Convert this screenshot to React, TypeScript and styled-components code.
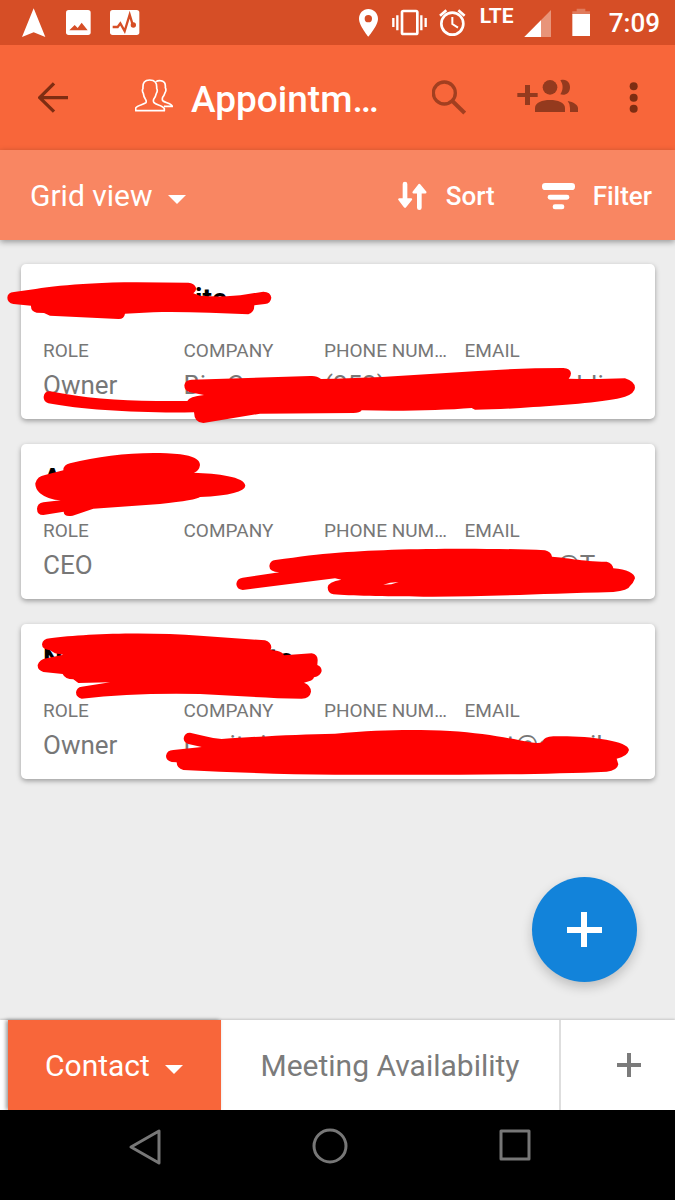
import React from 'react';
import styled, { createGlobalStyle } from 'styled-components';

const GlobalStyle = createGlobalStyle`
  * { box-sizing: border-box; }
  body { margin: 0; font-family: Roboto, "Liberation Sans", sans-serif; background: #ededed; }
  button { font: inherit; color: inherit; background: none; border: 0; padding: 0; cursor: pointer; }
  svg { display: block; flex: none; }
  h1, h2, dl, dt, dd { margin: 0; font-weight: 400; }
`;

const Screen = styled.div`
  min-height: 100vh;
  display: flex;
  flex-direction: column;
`;

const StatusBar = styled.div`
  height: 45px;
  display: flex;
  justify-content: space-between;
  padding: 0 15px 0 22px;
  background: #d64e26;
  color: #fff;
`;

const StatusGroup = styled.div<{ $gap: number }>`
  display: flex;
  gap: ${(p) => p.$gap}px;
`;

const Network = styled.span`
  width: 35px;
  font-size: 21px;
  font-weight: 700;
  line-height: 33px;
`;

const Clock = styled.time`
  font-size: 26px;
  font-weight: 500;
  line-height: 47px;
`;

const AppBar = styled.header`
  height: 105px;
  display: flex;
  align-items: center;
  padding: 0 37px 0 38px;
  background: #f8663a;
  color: #fff;
`;

const Heading = styled.div`
  flex: 1;
  display: flex;
  align-items: center;
  gap: 18px;
  margin-left: 67px;
`;

const Title = styled.h1`
  font-size: 37px;
  line-height: 44px;
  font-weight: 500;
  padding-top: 4px;
  white-space: nowrap;
`;

const Actions = styled.div`
  display: flex;
  gap: 51px;
`;

const Toolbar = styled.div`
  position: relative;
  height: 90px;
  display: flex;
  align-items: center;
  justify-content: space-between;
  padding: 2px 23px 0 30px;
  background: #f98662;
  color: #fff;
  box-shadow: 0 2px 6px rgba(0, 0, 0, 0.36);
`;

const DropButton = styled.button`
  display: flex;
  align-items: center;
  gap: 15px;
  font-size: 30px;
  line-height: 40px;
  white-space: nowrap;
`;

const ToolGroup = styled.div`
  display: flex;
  gap: 47px;
`;

const ToolButton = styled.button`
  display: flex;
  align-items: center;
  gap: 18px;
  font-size: 26px;
  font-weight: 500;
  line-height: 36px;
`;

const Main = styled.main`
  position: relative;
  flex: 1;
  display: flex;
  flex-direction: column;
  gap: 25px;
  padding: 24px 20px 160px 21px;
`;

const Card = styled.article`
  position: relative;
  padding: 18px 50px 18px 22px;
  background: #fff;
  border-radius: 5px;
  box-shadow: 0 2px 5px rgba(0, 0, 0, 0.34);
`;

const Name = styled.h2`
  height: 32px;
  margin-bottom: 25px;
  font-size: 28px;
  font-weight: 700;
  line-height: 34px;
  color: #000;
  white-space: nowrap;
`;

const Fields = styled.dl`
  display: grid;
  grid-template-columns: repeat(4, 1fr);
  color: #777;
`;

const Field = styled.div`
  min-width: 0;
  white-space: nowrap;
`;

const Label = styled.dt`
  font-size: 19px;
  line-height: 24px;
`;

const Value = styled.dd`
  height: 32px;
  margin-top: 6px !important;
  font-size: 26px;
  line-height: 32px;
`;

const Blank = styled.span<{ $width: number }>`
  display: inline-block;
  width: ${(p) => p.$width}px;
`;

const Marker = styled.svg`
  position: absolute;
  left: -21px;
  top: -14px;
  pointer-events: none;
`;

const AddButton = styled.button`
  position: absolute;
  right: 38px;
  bottom: 38px;
  width: 105px;
  height: 105px;
  display: grid;
  place-items: center;
  border-radius: 50%;
  background: #1283da;
  box-shadow: 0 5px 12px rgba(0, 0, 0, 0.2);
`;

const Tabs = styled.nav`
  height: 90px;
  display: flex;
  padding-left: 8px;
  background: #fff;
  box-shadow: 0 -1px 2px rgba(0, 0, 0, 0.16);
  position: relative;
`;

const ActiveTab = styled(DropButton)`
  width: 213px;
  padding-left: 37px;
  padding-top: 2px;
  background: #f8663a;
  color: #fff;
  box-shadow: -2px 0 4px rgba(0, 0, 0, 0.4);
`;

const Tab = styled.button`
  flex: 1;
  padding-top: 2px;
  font-size: 30px;
  line-height: 40px;
  color: #7b7b7b;
  border-right: 2px solid #dedede;
  white-space: nowrap;
`;

const NewTab = styled.button`
  width: 114px;
  display: flex;
  align-items: center;
  padding-left: 56px;
`;

const SystemBar = styled.nav`
  height: 90px;
  display: grid;
  grid-template-columns: repeat(3, 1fr);
  justify-items: center;
  padding: 0 68px 0 52px;
  background: #000;
`;

const Caret = () => (
  <svg width="18" height="27" viewBox="0 0 18 27" aria-hidden="true">
    <path d="M0 12H18L9 21Z" fill="#fff" />
  </svg>
);

type Fragment = string | number;

interface Contact {
  name: Fragment[];
  role: string;
  company: Fragment[];
  phone: Fragment[];
  email: Fragment[];
  marks: string[];
  gaps?: string;
}

const contacts: Contact[] = [
  {
    name: [152, 'ite'],
    role: 'Owner',
    company: ['Big C'],
    phone: ['(252)'],
    email: [112, 'bli'],
    marks: [
      'M22 143Q22 128 42 126C130 115 200 98 410 97L565 98Q583 100 588 113Q590 124 580 130L600 137C650 141 700 140 740 133L790 125Q812 125 814 143Q812 160 795 162L763 166Q763 188 745 193C650 190 550 184 460 187L375 191Q372 208 355 207L150 197L132 189L110 188Q92 184 93 167L40 162Q22 158 22 143Z',
      'M131 440Q133 424 150 424C250 444 350 453 470 453L562 453Q567 440 612 435L570 427Q553 422 553 406Q555 390 575 389L930 378Q950 376 963 387L1005 386L1145 381C1300 372 1450 359 1605 355L1690 354Q1711 355 1713 370Q1713 380 1706 386C1760 388 1820 387 1875 385Q1904 394 1905 413Q1904 430 1875 440C1820 456 1700 464 1600 471Q1500 479 1425 479L1415 474C1330 481 1200 484 1085 481Q1080 489 1060 489L780 491L610 519Q583 519 582 487C420 490 250 480 145 460Q130 455 131 440Z',
    ],
  },
  {
    name: ['A'],
    role: 'CEO',
    company: [],
    phone: [],
    email: [92, '@T'],
    marks: [
      'M190 121Q190 104 210 100C300 78 400 66 500 70C560 72 600 82 600 105Q598 122 582 128C650 130 736 140 736 167Q734 194 600 201Q590 210 480 222L280 236L218 257Q192 262 191 245L130 255Q111 255 111 236Q112 220 130 217L182 211Q145 210 120 190Q105 175 106 160Q112 138 135 135Z',
      'M709 462Q710 446 728 443L838 427Q808 426 808 408Q810 392 826 390C900 380 960 372 1005 369C1150 355 1450 352 1635 361Q1653 365 1656 380C1700 382 1740 394 1820 395Q1838 400 1840 415C1880 418 1905 430 1905 445Q1900 460 1890 468Q1885 482 1840 486C1600 492 1450 501 1270 500C1150 500 1050 497 1000 493Q983 490 983 472Q984 455 1024 449L1005 445L728 480Q710 478 709 462Z',
    ],
    gaps: 'M1150 464L1170 458L1196 456L1174 463Z',
  },
  {
    name: ['N', 206, 'te'],
    role: 'Owner',
    company: ['L', 32, 'it', 16, 'i'],
    phone: [],
    email: [42, 't@gmail'],
    marks: [
      'M126 103Q128 86 150 85C250 70 450 65 600 77L795 91Q812 95 814 112L812 120L830 122Q848 125 852 136L935 130Q953 133 953 150L952 165Q965 170 965 183Q962 198 942 202Q940 213 912 218Q933 226 933 245Q930 265 905 266C800 265 700 256 600 252Q400 248 245 266Q228 262 228 247Q230 232 245 230L330 217L235 219L220 208Q195 208 188 192L130 186Q112 180 113 165Q118 148 140 145L190 134L165 130L150 121Q126 118 126 103Z',
      'M551 385Q553 368 570 368C600 374 630 384 665 387C800 378 900 373 1005 371C1150 358 1250 358 1350 363C1450 369 1530 385 1590 397Q1620 402 1628 395Q1632 380 1660 379C1750 376 1886 390 1887 420Q1882 440 1850 446L1855 463Q1852 482 1820 485C1600 495 1300 495 1005 494C850 494 700 487 550 480Q530 475 530 457L515 456Q498 452 498 438Q500 420 520 420L605 411L565 402Q551 398 551 385Z',
    ],
  },
];

const Fragments = ({ parts }: { parts: Fragment[] }) => (
  <>
    {parts.map((part, i) =>
      typeof part === 'number' ? <Blank key={i} $width={part} /> : <React.Fragment key={i}>{part}</React.Fragment>,
    )}
  </>
);

const ContactCard = ({ contact }: { contact: Contact }) => {
  const fields: [string, Fragment[]][] = [
    ['ROLE', [contact.role]],
    ['COMPANY', contact.company],
    ['PHONE NUM…', contact.phone],
    ['EMAIL', contact.email],
  ];
  return (
    <Card>
      <Name><Fragments parts={contact.name} /></Name>
      <Fields>
        {fields.map(([label, value]) => (
          <Field key={label}>
            <Label>{label}</Label>
            <Value><Fragments parts={value} /></Value>
          </Field>
        ))}
      </Fields>
      <Marker width="675" height="180" viewBox="0 0 2025 540" aria-hidden="true">
        {contact.marks.map((d) => <path key={d} d={d} fill="#f00" />)}
        {contact.gaps && <path d={contact.gaps} fill="#fff" />}
      </Marker>
    </Card>
  );
};

export default function App() {
  return (
    <Screen>
      <GlobalStyle />
      <StatusBar>
        <StatusGroup $gap={19}>
          <svg width="25" height="45" viewBox="66 0 75 135">
            <path d="M101 25L136 111L101 97L66 111Z" fill="#fff" />
          </svg>
          <svg width="25" height="45" viewBox="199 0 75 135">
            <rect x="199" y="30" width="74" height="75" rx="8" fill="#fff" />
            <path d="M209 91L225 75L234 84L246 68L264 91Z" fill="#d64e26" />
          </svg>
          <svg width="30" height="45" viewBox="329 0 90 135">
            <rect x="329" y="30" width="88" height="75" rx="8" fill="#fff" />
            <path d="M337 81H352L360 70L373 93L388 44L397 74" fill="none" stroke="#d64e26" strokeWidth="7" />
            <circle cx="399" cy="75" r="8" fill="#d64e26" />
          </svg>
        </StatusGroup>
        <StatusGroup $gap={8}>
          <svg width="28" height="45" viewBox="48 0 84 135">
            <path fillRule="evenodd" d="M85 27C69 27 57 40 57 56C57 76 85 110 85 110S114 76 114 56C114 40 101 27 85 27ZM85 45A11 11 0 1 1 85 67A11 11 0 1 1 85 45Z" fill="#fff" />
          </svg>
          <svg width="38" height="45" viewBox="156 0 114 135" fill="none" stroke="#fff">
            <rect x="186" y="33" width="46" height="69" rx="4" strokeWidth="8" />
            <path d="M160 54V81M172 46V91M244 46V91M257 54V81" strokeWidth="7" />
          </svg>
          <svg width="34" height="45" viewBox="294 0 102 135" fill="none" stroke="#fff">
            <circle cx="337" cy="71" r="33" strokeWidth="8" />
            <path d="M337 51V72L354 83" strokeWidth="6" />
            <path d="M300 47L319 31M374 47L355 31" strokeWidth="8" />
          </svg>
          <Network>LTE</Network>
          <svg width="35" height="45" viewBox="546 0 105 135">
            <path d="M630 30V111H550Z" fill="#e89479" />
            <path d="M600 61V111H550Z" fill="#fff" />
          </svg>
          <svg width="35" height="45" viewBox="675 0 105 135">
            <path d="M694 34H707V26H733V34H747V45H694Z" fill="#e07b5c" />
            <path d="M694 42H747V108H694Z" fill="#fff" />
          </svg>
          <Clock>7:09</Clock>
        </StatusGroup>
      </StatusBar>

      <AppBar>
        <button aria-label="Back">
          <svg width="30" height="105" viewBox="114 135 90 315">
            <path d="M204 293H121M162 250L119 293L162 335" fill="none" stroke="#7e2d12" strokeWidth="10" />
          </svg>
        </button>
        <Heading>
          <svg width="38" height="105" viewBox="405 135 114 315" fill="none" stroke="#fff" strokeWidth="5" strokeLinejoin="round">
            <path d="M407 332V324C411 316 431 314 438 308Q440 302 436 297Q431 290 430 280Q425 272 429 265Q427 240 449 240Q472 240 470 265Q474 272 469 280Q467 290 461 298Q459 304 462 308C469 315 489 316 493 326V332Z" />
            <path d="M468 245Q474 241 481 242Q498 243 496 263Q500 271 495 278Q492 287 488 292Q486 298 488 302C494 309 514 308 517 319H492" />
          </svg>
          <Title>Appointm…</Title>
        </Heading>
        <Actions>
          <button aria-label="Search">
            <svg width="34" height="105" viewBox="276 135 102 315" fill="none" stroke="#a23f20">
              <circle cx="313" cy="279" r="33" strokeWidth="10" />
              <path d="M337 303L374 339" strokeWidth="12" />
            </svg>
          </button>
          <button aria-label="Add people">
            <svg width="61" height="105" viewBox="531 135 183 315" fill="#943a1e">
              <path d="M532 279H555V255H570V279H593V291H570V315H555V291H532Z" />
              <circle cx="630" cy="262" r="22" />
              <path d="M585 336V324C585 308 607 300 630 300S675 308 675 324V336Z" />
              <path d="M661 241C680 235 691 249 690 263C689 279 676 288 661 283C670 269 670 254 661 241Z" />
              <path d="M683 303C700 306 714 314 714 325V336H690V324Q690 311 683 303Z" />
            </svg>
          </button>
          <button aria-label="More options">
            <svg width="9" height="105" viewBox="867 135 27 315" fill="#7e2d12">
              <circle cx="881" cy="259" r="12" />
              <circle cx="881" cy="293" r="12" />
              <circle cx="881" cy="326" r="12" />
            </svg>
          </button>
        </Actions>
      </AppBar>

      <Toolbar>
        <DropButton>Grid view<Caret /></DropButton>
        <ToolGroup>
          <ToolButton>
            <svg width="30" height="30" viewBox="171 90 90 90" fill="#fff" stroke="#fff" strokeLinejoin="round" strokeLinecap="round">
              <path d="M192 99V150M235 120V170" strokeWidth="14" fill="none" />
              <path d="M175 145H210L192 167ZM218 124H253L235 102Z" strokeWidth="7" />
            </svg>
            Sort
          </ToolButton>
          <ToolButton>
            <svg width="33" height="30" viewBox="605 93 99 90" fill="#fff">
              <rect x="605" y="99" width="99" height="21" rx="10" />
              <rect x="622" y="134" width="65" height="15" rx="7" />
              <rect x="637" y="163" width="35" height="15" rx="7" />
            </svg>
            Filter
          </ToolButton>
        </ToolGroup>
      </Toolbar>

      <Main>
        {contacts.map((contact, i) => <ContactCard key={i} contact={contact} />)}
        <AddButton aria-label="Add contact">
          <svg width="35" height="35" viewBox="0 0 35 35">
            <path d="M17 0V35M0 18H35" stroke="#fff" strokeWidth="6" />
          </svg>
        </AddButton>
      </Main>

      <Tabs>
        <ActiveTab>Contact<Caret /></ActiveTab>
        <Tab>Meeting Availability</Tab>
        <NewTab aria-label="New tab">
          <svg width="24" height="24" viewBox="0 0 24 24">
            <path d="M12 0V24M0 12H24" stroke="#7b7b7b" strokeWidth="4" />
          </svg>
        </NewTab>
      </Tabs>

      <SystemBar>
        <button aria-label="System back">
          <svg width="36" height="90" viewBox="0 0 36 90" fill="none" stroke="#777" strokeWidth="3" strokeLinejoin="round">
            <path d="M32 21V53L4 37Z" />
          </svg>
        </button>
        <button aria-label="Home">
          <svg width="36" height="90" viewBox="0 0 36 90" fill="none" stroke="#777" strokeWidth="3">
            <circle cx="18" cy="36" r="16" />
          </svg>
        </button>
        <button aria-label="Recent apps">
          <svg width="36" height="90" viewBox="0 0 36 90" fill="none" stroke="#777" strokeWidth="3" strokeLinejoin="round">
            <rect x="4" y="21" width="28" height="28" />
          </svg>
        </button>
      </SystemBar>
    </Screen>
  );
}
